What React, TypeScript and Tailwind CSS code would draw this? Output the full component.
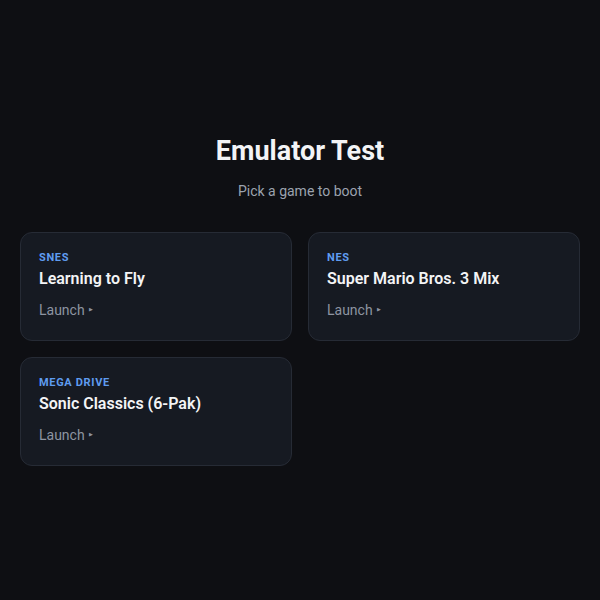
import React from 'react';

interface Game {
  id: string;
  system: string;
  title: string;
}

const games: Game[] = [
  { id: 'snes-fly', system: 'SNES', title: 'Learning to Fly' },
  { id: 'nes-smb3', system: 'NES', title: 'Super Mario Bros. 3 Mix' },
  { id: 'md-sonic', system: 'Mega Drive', title: 'Sonic Classics (6-Pak)' },
];

const GameCard: React.FC<{ game: Game }> = ({ game }) => (
  <div className="bg-[#161a22] border border-[#262b35] rounded-xl px-[18px] pt-[18px] pb-5 cursor-pointer hover:border-[#3b4250] transition-colors">
    <p className="text-[11px] leading-[14px] font-bold uppercase tracking-[0.06em] text-[#5f9cf0]">{game.system}</p>
    <h3 className="mt-0.5 text-[16px] leading-6 font-semibold text-[#f3f4f6]">{game.title}</h3>
    <p className="mt-[9px] text-[14px] leading-5 text-[#8d94a1] flex items-center">
      Launch
      <span className="ml-[4px] text-[5px] leading-none">▶</span>
    </p>
  </div>
);

export default function App() {
  return (
    <div className="min-h-screen bg-[#0e0f13] flex items-center justify-center px-5 font-['Roboto',_'Liberation_Sans',_sans-serif]">
      <div className="w-full max-w-[560px]">
        <h1 className="text-center text-[27px] leading-8 font-bold text-[#f3f4f6]">Emulator Test</h1>
        <p className="mt-3.5 text-center text-[14px] leading-5 text-[#9ca3af]">Pick a game to boot</p>
        <div className="mt-[31px] grid grid-cols-2 gap-4">
          {games.map(game => (
            <GameCard key={game.id} game={game} />
          ))}
        </div>
      </div>
    </div>
  );
}
